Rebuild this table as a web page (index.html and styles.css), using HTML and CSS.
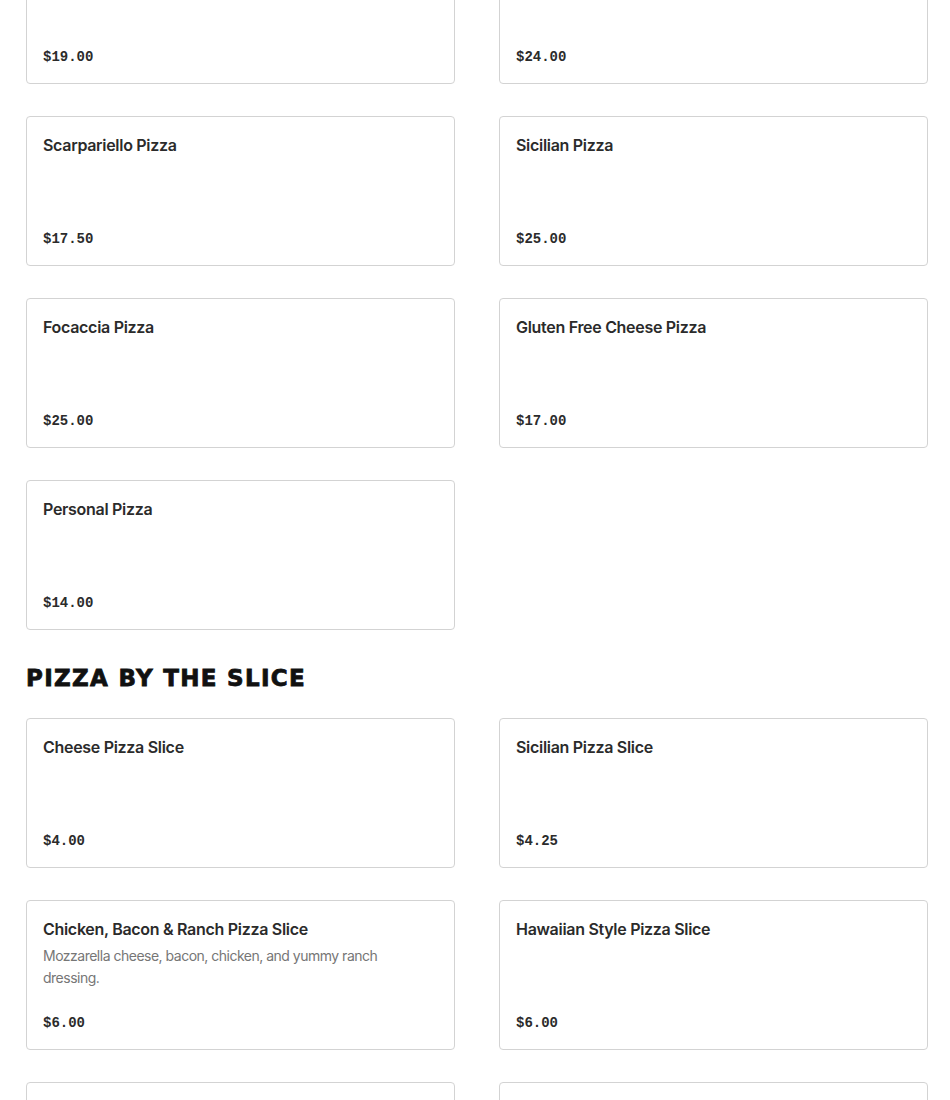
FILE: index.html
```html
<!DOCTYPE html>
<html>
<head>
<meta charset="utf-8">
<link rel="stylesheet" href="styles.css">
</head>
<body>
<main class="menu">
  <section class="section section--first">
    <div class="grid">
      <div class="card"><div class="card-title">Grandma Pizza</div><div class="price">$19.00</div></div>
      <div class="card"><div class="card-title">Margherita Pizza</div><div class="price">$24.00</div></div>
      <div class="card"><div class="card-title">Scarpariello Pizza</div><div class="price">$17.50</div></div>
      <div class="card"><div class="card-title">Sicilian Pizza</div><div class="price">$25.00</div></div>
      <div class="card"><div class="card-title">Focaccia Pizza</div><div class="price">$25.00</div></div>
      <div class="card"><div class="card-title">Gluten Free Cheese Pizza</div><div class="price">$17.00</div></div>
      <div class="card"><div class="card-title">Personal Pizza</div><div class="price">$14.00</div></div>
    </div>
  </section>
  <section class="section">
    <h2 class="section-title">PIZZA BY THE SLICE</h2>
    <div class="grid">
      <div class="card"><div class="card-title">Cheese Pizza Slice</div><div class="price">$4.00</div></div>
      <div class="card"><div class="card-title">Sicilian Pizza Slice</div><div class="price">$4.25</div></div>
      <div class="card"><div class="card-title">Chicken, Bacon &amp; Ranch Pizza Slice</div><div class="desc">Mozzarella cheese, bacon, chicken, and yummy ranch dressing.</div><div class="price">$6.00</div></div>
      <div class="card"><div class="card-title">Hawaiian Style Pizza Slice</div><div class="price">$6.00</div></div>
      <div class="card"><div class="card-title">Pepperoni Pizza Slice</div><div class="price">$4.50</div></div>
      <div class="card"><div class="card-title">Buffalo Chicken Pizza Slice</div><div class="price">$6.00</div></div>
    </div>
  </section>
</main>
</body>
</html>
```
FILE: styles.css
```css
html, body {
  margin: 0;
  padding: 0;
  background: #ffffff;
}
body {
  font-family: "Liberation Sans", Arial, sans-serif;
  color: #2b2b2b;
}
.menu {
  width: 902px;
  margin-left: 26px;
}
.section--first {
  margin-top: -66px;
}
.grid {
  display: grid;
  grid-template-columns: 429px 429px;
  column-gap: 44px;
  row-gap: 32px;
}
.card {
  box-sizing: border-box;
  min-height: 150px;
  border: 1px solid #d3d3d3;
  border-radius: 4px;
  padding: 16px;
  display: flex;
  flex-direction: column;
  background: #fff;
}
.card-title {
  font-size: 16px;
  line-height: 24px;
  font-weight: 600;
  letter-spacing: -0.3px;
  color: #2b2b2b;
  font-family: "Inter", "Liberation Sans", sans-serif;
}
.desc {
  margin-top: 4px;
  font-size: 14px;
  line-height: 22px;
  letter-spacing: -0.5px;
  color: #767676;
  font-family: "Inter", "Liberation Sans", sans-serif;
  padding-right: 20px;
}
.price {
  margin-top: auto;
  font-family: "Liberation Mono", "Courier New", monospace;
  font-weight: 700;
  font-size: 14px;
  line-height: 20px;
  color: #2b2b2b;
}
.section-title {
  margin: 32px 0 24px;
  font-family: "DejaVu Sans", "Liberation Sans", sans-serif;
  font-weight: 700;
  font-size: 23px;
  line-height: 32px;
  color: #111;
  letter-spacing: 1.3px;
  -webkit-text-stroke: 0.8px #111;
}
```
